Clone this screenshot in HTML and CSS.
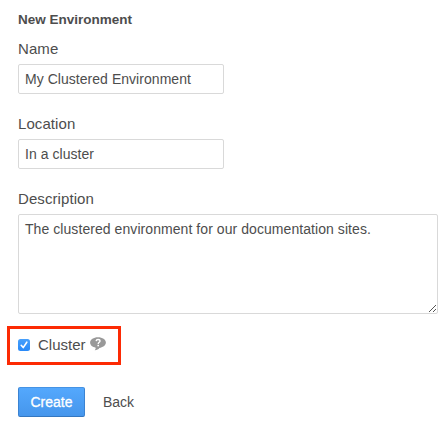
FILE: index.html
```
<!DOCTYPE html>
<html lang="en">
<head>
<meta charset="utf-8">
<title>New Environment</title>
<link rel="stylesheet" href="styles.css">
</head>
<body>
<form class="form">
  <h1 class="title">New Environment</h1>
  <div class="field">
    <label class="label" for="name">Name</label>
    <input class="control" id="name" type="text" value="My Clustered Environment">
  </div>
  <div class="field">
    <label class="label" for="location">Location</label>
    <input class="control" id="location" type="text" value="In a cluster">
  </div>
  <div class="field">
    <label class="label" for="description">Description</label>
    <div class="area-wrap">
      <textarea class="control area" id="description">The clustered environment for our documentation sites.</textarea>
      <svg class="grip" width="9" height="9" viewBox="0 0 9 9" shape-rendering="crispEdges"><path d="M1 7h1v1h-1zM2 6h1v1h-1zM3 5h1v1h-1zM4 4h1v1h-1zM5 3h1v1h-1zM6 2h1v1h-1zM7 1h1v1h-1zM5 7h1v1h-1zM6 6h1v1h-1zM7 5h1v1h-1z" fill="#555"/></svg>
    </div>
  </div>
  <div class="cluster">
    <svg class="check" width="12" height="12" viewBox="0 0 12 12"><defs><linearGradient id="blue" x2="0" y2="1"><stop stop-color="#47a0fb"/><stop offset="1" stop-color="#2889f8"/></linearGradient></defs><rect width="12" height="12" rx="2.5" fill="url(#blue)"/><path d="M3.2 6.3 5.2 8.6 8.8 3.2" fill="none" stroke="#fff" stroke-width="1.6" stroke-linecap="round" stroke-linejoin="round"/></svg>
    <span class="cluster-label">Cluster</span>
    <svg class="help" width="16" height="14" viewBox="0 0 16 14"><path d="M8 .2C12.400.2 15.900 2.500 15.900 5.600S12.500 10.700 9.400 10.900C8.500 12.200 7 13.100 4.700 13.300 5.500 12.500 5.800 11.600 5.700 10.700 2.500 10.200.1 8.300.1 5.600.1 2.500 3.600.2 8 .2Z" fill="#999"/><path d="M6.100 4.100C6.300 2.900 7.100 2.500 8 2.500 9.200 2.500 10 3.100 10 4 10 5.200 8.200 5.300 8.200 6.900" fill="none" stroke="#fff" stroke-width="1.400"/><rect x="7.400" y="7.800" width="1.600" height="1.500" fill="#fff"/></svg>
  </div>
  <div class="actions">
    <button class="create" type="button">Create</button>
    <a class="back">Back</a>
  </div>
</form>
</body>
</html>
```
FILE: styles.css
```
* { box-sizing: border-box; }
body {
  margin: 0;
  background: #fff;
  color: #4d4d4d;
  font-family: "Liberation Sans", Arial, sans-serif;
  overflow: hidden;
}
.form { padding: 10px 9px 0 18px; }
.title {
  margin: 0 0 10px;
  font-size: 13.5px;
  line-height: 19px;
}
.field { height: 75px; }
.field:nth-of-type(3) { height: 187px; }
.label { display: block; height: 25px; font-size: 15px; line-height: 20px; letter-spacing: 0.08px; }
.control {
  display: block;
  width: 206px;
  height: 30px;
  margin: 0;
  padding: 0 6px;
  border: 1px solid #d9d9d9;
  border-radius: 2px;
  background: #fff;
  color: #4d4d4d;
  font: 14px/20px "Liberation Sans", Arial, sans-serif;
  letter-spacing: 0.04px;
  outline: none;
}
.area-wrap { position: relative; }
.area { width: 420px; height: 100px; padding: 4px 6px; resize: none; overflow: hidden; letter-spacing: 0.065px; }
.grip { position: absolute; right: 1px; bottom: 1px; }
.cluster {
  display: flex;
  width: 114px;
  height: 39px;
  margin: -50px 0 0 -11px;
  padding: 0 0 1px 8px;
  border: 3px solid #fc2a04;
  align-items: center;
}
.check { margin-top: -1px; }
.cluster-label { margin-left: 8px; font-size: 15px; line-height: 20px; }
.help { margin: -3px 0 0 4px; }
.actions { display: flex; margin-top: 22px; align-items: center; }
.create {
  width: 67px;
  height: 30px;
  padding: 0;
  border: 1px solid #3b83d2;
  border-top-color: #4593e4;
  border-bottom-color: #3477c0;
  border-radius: 2px;
  background: linear-gradient(#54a8fd, #4696ec);
  color: #fff;
  font: 14px/20px "Liberation Sans", Arial, sans-serif;
  -webkit-text-stroke: 0.3px #fff;
}
.back { margin-left: 18px; font-size: 14px; line-height: 20px; }
```
